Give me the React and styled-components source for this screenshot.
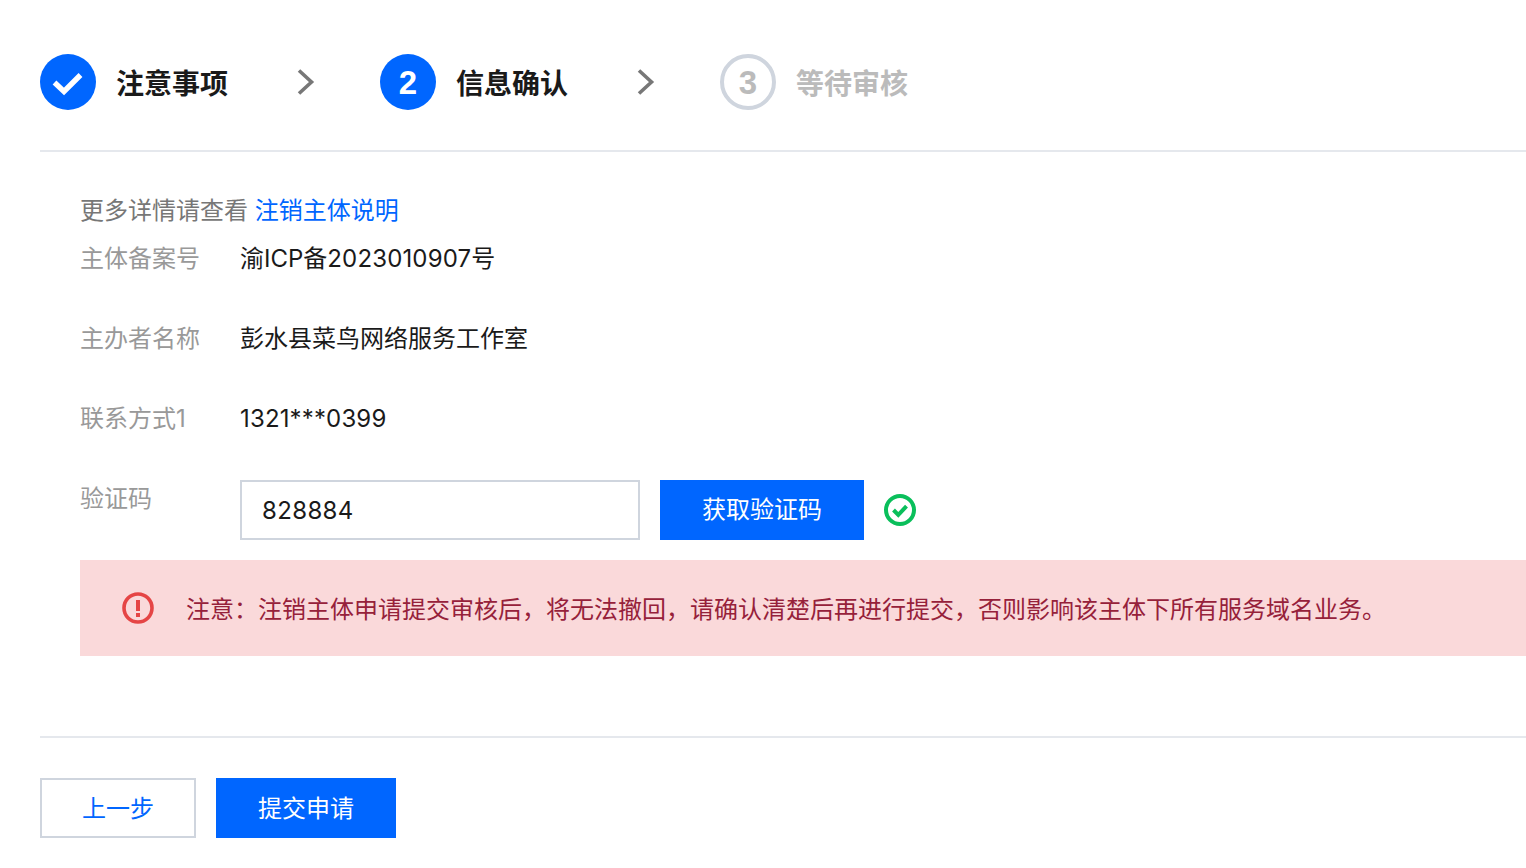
import styled, { createGlobalStyle } from "styled-components";

const GlobalStyle = createGlobalStyle`
  html, body {
    margin: 0;
    padding: 0;
    background: #fff;
    overflow: hidden;
  }
  body {
    font-family: Inter, "Noto Sans CJK SC", "Noto Sans", sans-serif;
    color: #1a1a1a;
  }
`;

const Page = styled.div`
  width: 1526px;
  height: 868px;
  padding-left: 40px;
  box-sizing: border-box;
  overflow: hidden;
`;

// Stepper
const Steps = styled.div`
  display: flex;
  align-items: center;
  height: 152px;
  box-sizing: border-box;
  padding-top: 54px;
  padding-bottom: 40px;
  border-bottom: 2px solid #e5e8ed;
`;

const Step = styled.div`
  display: flex;
  align-items: center;
  gap: 20px;
`;

const Circle = styled.div`
  width: 56px;
  height: 56px;
  box-sizing: border-box;
  border-radius: 50%;
  padding-top: 2px;
  display: flex;
  align-items: center;
  justify-content: center;
  font-family: "Liberation Sans", Arial, sans-serif;
  font-size: 33px;
  font-weight: 700;
  color: ${(p) => (p.$pending ? "#bbb" : "#fff")};
  background: ${(p) => (p.$pending ? "#fff" : "#0066ff")};
  border: ${(p) => (p.$pending ? "4px solid #cfd5de" : "none")};
`;

const StepLabel = styled.span`
  font-size: 28px;
  line-height: 40px;
  padding-top: 3px;
  font-weight: 700;
  color: ${(p) => (p.$pending ? "#bbb" : "#1a1a1a")};
`;

const Arrow = styled.svg`
  display: block;
  width: 18px;
  height: 28px;
  margin: 0 65px 0 69px;
  flex: none;
`;

// Form body
const Body = styled.div`
  margin-left: 40px;
  height: 584px;
  padding-top: 40px;
  box-sizing: border-box;
`;

const Intro = styled.div`
  font-size: 24px;
  line-height: 38px;
  height: 48px;
  color: #777;
`;

const Link = styled.a`
  color: #0066ff;
  text-decoration: none;
`;

const Row = styled.div`
  display: flex;
  height: 80px;
  font-size: 24px;
  line-height: 38px;
`;

const Label = styled.div`
  width: 160px;
  flex: none;
  color: #999;
`;

const Value = styled.div`
  color: #1a1a1a;
`;

const Digits = styled.span`
  letter-spacing: 0.15px;
`;

const CodeInput = styled.div`
  width: 400px;
  height: 60px;
  box-sizing: border-box;
  border: 2px solid #cfd5de;
  padding-left: 20px;
  line-height: 57px;
  letter-spacing: 0.35px;
  color: #1a1a1a;
`;

const PrimaryButton = styled.button`
  height: 60px;
  width: ${(p) => p.$width}px;
  border: none;
  border-radius: 0;
  padding: 0 0 ${(p) => p.$lift || 0}px;
  background: #0066ff;
  color: #fff;
  font: inherit;
  font-size: 24px;
  flex: none;
`;

const SendButton = styled(PrimaryButton)`
  margin-left: 20px;
`;

const CheckIcon = styled.svg`
  display: block;
  width: 32px;
  height: 32px;
  margin: 14px 0 0 20px;
`;

const Alert = styled.div`
  display: flex;
  align-items: center;
  height: 96px;
  box-sizing: border-box;
  padding-left: 42px;
  background: #fad9da;
  color: #96213a;
  font-size: 24px;
  white-space: nowrap;
`;

const AlertIcon = styled.svg`
  display: block;
  width: 32px;
  height: 32px;
  margin-right: 32px;
  flex: none;
`;

const AlertText = styled.span`
  padding-bottom: 2px;
`;

// Footer
const Footer = styled.div`
  border-top: 2px solid #e5e8ed;
  padding-top: 40px;
  display: flex;
  gap: 20px;
`;

const BackButton = styled.button`
  width: 156px;
  height: 60px;
  box-sizing: border-box;
  border: 2px solid #cfd5de;
  border-radius: 0;
  padding: 0 0 4px;
  background: #fff;
  color: #0066ff;
  font: inherit;
  font-size: 24px;
`;

const NOTICE =
  "注意\uFF1A注销主体申请提交审核后\uFF0C将无法撤回\uFF0C请确认清楚后再进行提交\uFF0C否则影响该主体下所有服务域名业务\u3002";

function Chevron() {
  return (
    <Arrow viewBox="0 0 18 28">
      <path d="M2 2.5 L14.5 14 L2 25.5" fill="none" stroke="#777" strokeWidth="3.6" />
    </Arrow>
  );
}

export default function App() {
  return (
    <>
      <GlobalStyle />
      <Page>
        <Steps>
          <Step>
            <Circle>
              <svg width="32" height="32" viewBox="0 0 32 32">
                <path d="M2.5 15.5 L12 24.5 L28.5 8" fill="none" stroke="#fff" strokeWidth="5.4" />
              </svg>
            </Circle>
            <StepLabel>注意事项</StepLabel>
          </Step>
          <Chevron />
          <Step>
            <Circle>2</Circle>
            <StepLabel>信息确认</StepLabel>
          </Step>
          <Chevron />
          <Step>
            <Circle $pending>3</Circle>
            <StepLabel $pending>等待审核</StepLabel>
          </Step>
        </Steps>

        <Body>
          <Intro>
            更多详情请查看 <Link href="#">注销主体说明</Link>
          </Intro>
          <Row>
            <Label>主体备案号</Label>
            <Value>
              渝ICP备<Digits>2023010907</Digits>号
            </Value>
          </Row>
          <Row>
            <Label>主办者名称</Label>
            <Value>彭水县菜鸟网络服务工作室</Value>
          </Row>
          <Row>
            <Label>联系方式1</Label>
            <Value>
              <Digits>1321***0399</Digits>
            </Value>
          </Row>
          <Row>
            <Label>验证码</Label>
            <CodeInput>828884</CodeInput>
            <SendButton $width={204}>获取验证码</SendButton>
            <CheckIcon viewBox="0 0 32 32">
              <circle cx="16" cy="16" r="14" fill="none" stroke="#0abf5b" strokeWidth="4" />
              <path d="M9.5 16 L14.3 20.8 L22.5 12.2" fill="none" stroke="#0abf5b" strokeWidth="4" />
            </CheckIcon>
          </Row>
          <Alert>
            <AlertIcon viewBox="0 0 32 32">
              <circle cx="16" cy="16" r="14" fill="none" stroke="#e54545" strokeWidth="3.6" />
              <rect x="14" y="8" width="4" height="11" fill="#e54545" />
              <rect x="14" y="21" width="4" height="4" fill="#e54545" />
            </AlertIcon>
            <AlertText>{NOTICE}</AlertText>
          </Alert>
        </Body>

        <Footer>
          <BackButton>上一步</BackButton>
          <PrimaryButton $width={180} $lift={4}>提交申请</PrimaryButton>
        </Footer>
      </Page>
    </>
  );
}
